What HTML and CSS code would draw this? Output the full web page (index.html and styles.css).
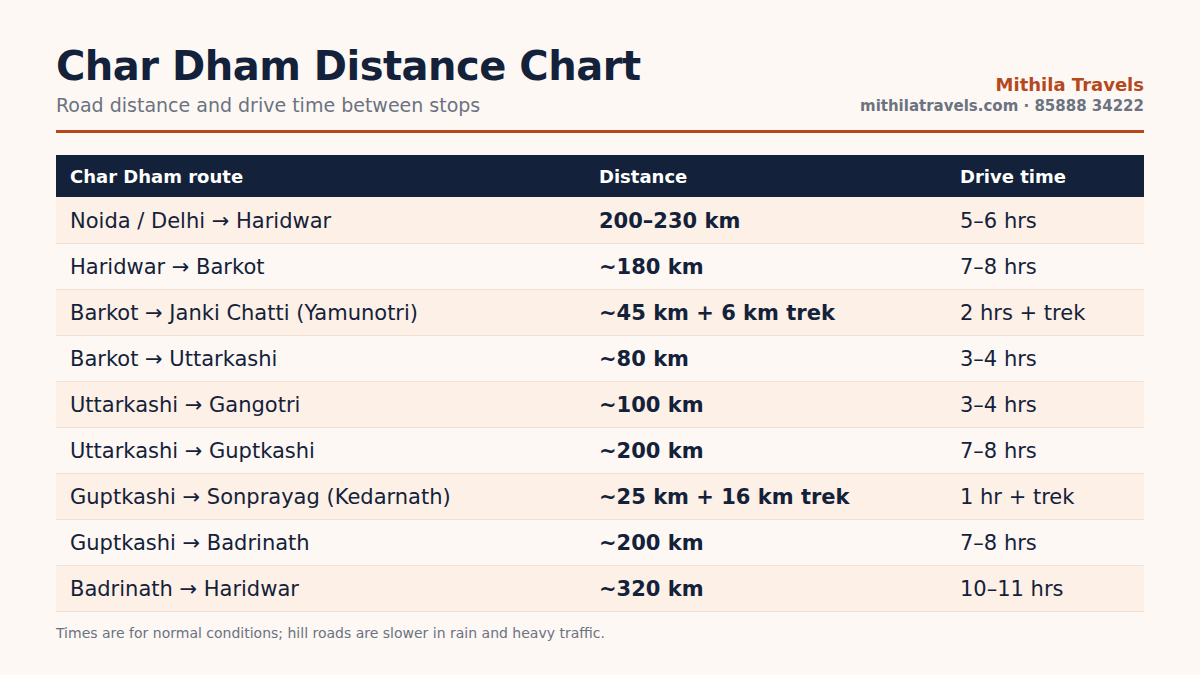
FILE: index.html
```html
<!DOCTYPE html>
<html>
<head>
<meta charset="utf-8">
<link rel="stylesheet" href="styles.css">
</head>
<body>
<div class="page">
  <header class="head">
    <div class="titles">
      <h1>Char Dham Distance Chart</h1>
      <p class="sub">Road distance and drive time between stops</p>
    </div>
    <div class="brand">
      <div class="brand-name">Mithila Travels</div>
      <div class="brand-contact">mithilatravels.com · 85888 34222</div>
    </div>
  </header>
  <table class="chart">
    <thead>
      <tr><th class="c1">Char Dham route</th><th class="c2">Distance</th><th class="c3">Drive time</th></tr>
    </thead>
    <tbody>
      <tr><td>Noida / Delhi → Haridwar</td><td class="dist">200–230 km</td><td>5–6 hrs</td></tr>
      <tr><td>Haridwar → Barkot</td><td class="dist">~180 km</td><td>7–8 hrs</td></tr>
      <tr><td>Barkot → Janki Chatti (Yamunotri)</td><td class="dist">~45 km + 6 km trek</td><td>2 hrs + trek</td></tr>
      <tr><td>Barkot → Uttarkashi</td><td class="dist">~80 km</td><td>3–4 hrs</td></tr>
      <tr><td>Uttarkashi → Gangotri</td><td class="dist">~100 km</td><td>3–4 hrs</td></tr>
      <tr><td>Uttarkashi → Guptkashi</td><td class="dist">~200 km</td><td>7–8 hrs</td></tr>
      <tr><td>Guptkashi → Sonprayag (Kedarnath)</td><td class="dist">~25 km + 16 km trek</td><td>1 hr + trek</td></tr>
      <tr><td>Guptkashi → Badrinath</td><td class="dist">~200 km</td><td>7–8 hrs</td></tr>
      <tr><td>Badrinath → Haridwar</td><td class="dist">~320 km</td><td>10–11 hrs</td></tr>
    </tbody>
  </table>
  <p class="note">Times are for normal conditions; hill roads are slower in rain and heavy traffic.</p>
</div>
</body>
</html>
```
FILE: styles.css
```css
* { box-sizing: border-box; }
html, body { margin: 0; padding: 0; }
body {
  background: #fdf8f4;
  font-family: "DejaVu Sans", sans-serif;
  color: #13223a;
  width: 1200px;
  height: 675px;
  overflow: hidden;
}
.page { padding: 42px 56px 0; }
.head {
  display: flex;
  justify-content: space-between;
  align-items: flex-end;
  padding-bottom: 13px;
  border-bottom: 3px solid #b5481d;
}
h1 {
  margin: 0;
  font-size: 40px;
  line-height: 48px;
  font-weight: bold;
  letter-spacing: -0.5px;
  color: #13223a;
}
.sub {
  margin: 3px 0 0;
  font-size: 19px;
  line-height: 24px;
  color: #6b7280;
}
.brand { text-align: right; padding-bottom: 1px; }
.brand-name {
  font-size: 18px;
  line-height: 21px;
  font-weight: bold;
  color: #b5481d;
  position: relative;
  top: -1px;
}
.brand-contact {
  font-size: 15px;
  line-height: 20px;
  font-weight: bold;
  color: #6b7280;
}
.chart {
  margin-top: 22px;
  width: 100%;
  border-collapse: collapse;
}
.chart th {
  background: #13223a;
  color: #fff;
  text-align: left;
  font-size: 18px;
  font-weight: bold;
  height: 42px;
  padding: 0 14px;
}
.c1 { width: 529px; }
.c2 { width: 361px; }
.chart td {
  height: 46px;
  padding: 2px 14px 0;
  font-size: 21px;
  border-bottom: 1px solid #f1e1d5;
}
.chart tbody tr:nth-child(odd) td { background: #fdf0e6; }
.chart tbody tr:nth-child(even) td { background: #fef8f4; }
.dist { font-weight: bold; }
.note {
  margin: 11px 0 0;
  font-size: 14px;
  line-height: 20px;
  color: #6b7280;
}
```
